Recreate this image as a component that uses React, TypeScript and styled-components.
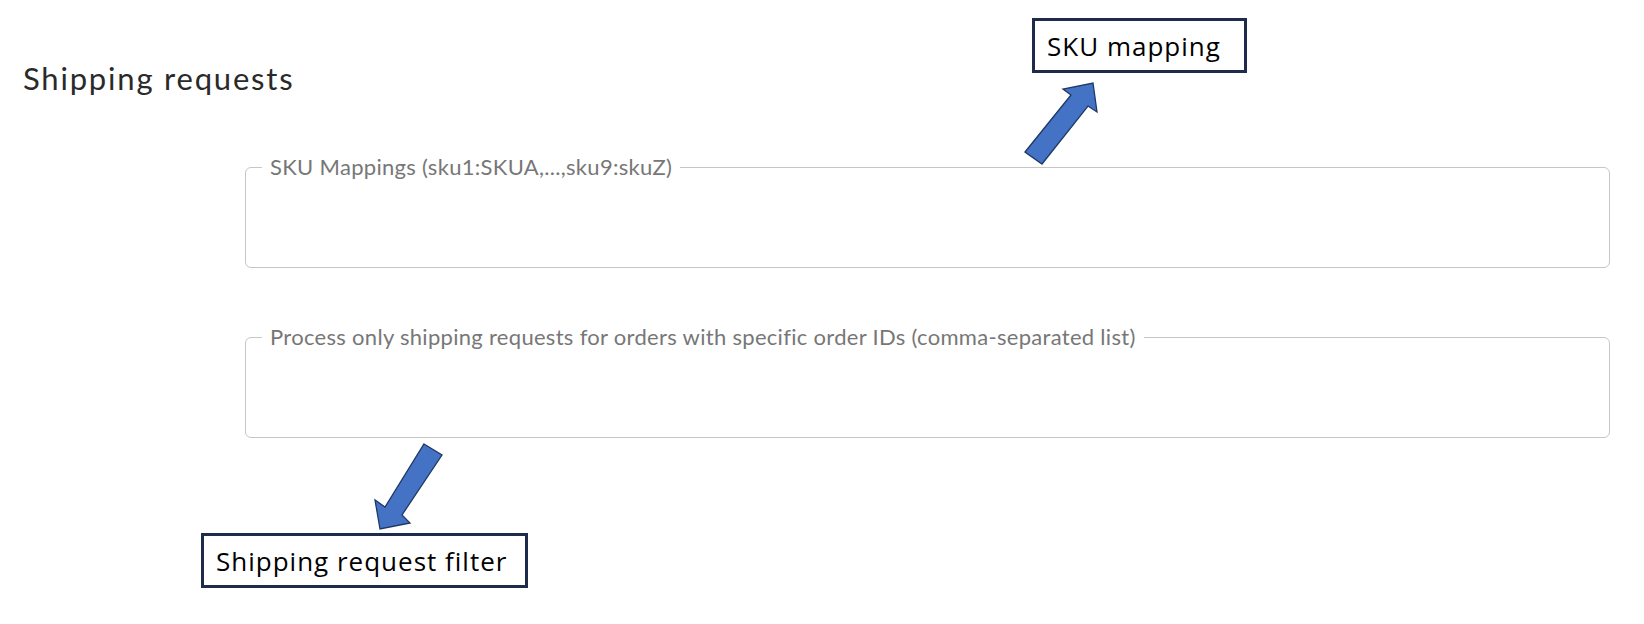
import styled, { createGlobalStyle } from 'styled-components';

const GlobalStyle = createGlobalStyle`
  html, body {
    margin: 0;
    padding: 0;
    background: #fff;
  }
  body {
    font-family: Lato, "Noto Sans", sans-serif;
  }
`;

const Page = styled.div`
  position: relative;
  width: 1644px;
  height: 624px;
  overflow: hidden;
  background: #fff;
`;

const Title = styled.h2`
  margin: 0;
  padding: 58px 0 0 23px;
  font-family: Lato, "Noto Sans", sans-serif;
  font-weight: 400;
  font-size: 31px;
  letter-spacing: 1.8px;
  line-height: 40px;
  color: #2a2a2a;
`;

const Fields = styled.div`
  display: flex;
  flex-direction: column;
  gap: 57px;
  width: 1365px;
  margin: 57px 0 0 245px;
`;

const FieldSet = styled.fieldset`
  box-sizing: border-box;
  margin: 0;
  padding: 0 16px;
  height: 113px;
  border: 1px solid #c6c6c6;
  border-radius: 6px;
  display: flex;
`;

const Legend = styled.legend`
  padding: 0 8px;
  font-family: Lato, "Noto Sans", sans-serif;
  font-size: 22px;
  letter-spacing: 0.3px;
  line-height: 24px;
  color: #777;
`;

const Input = styled.textarea`
  flex: 1;
  border: none;
  outline: none;
  resize: none;
  background: transparent;
  font: inherit;
`;

const Callout = styled.div<{ $left: number; $top: number; $width: number }>`
  position: absolute;
  left: ${(p) => p.$left}px;
  top: ${(p) => p.$top}px;
  width: ${(p) => p.$width}px;
  height: 55px;
  box-sizing: border-box;
  border: 3px solid #1f2b4b;
  background: #fff;
  padding-left: 12px;
  display: flex;
  align-items: center;
  font-family: "Open Sans", "Noto Sans", sans-serif;
  font-size: 26px;
  letter-spacing: 1px;
  color: #000;
`;

const Arrows = styled.svg`
  position: absolute;
  left: 0;
  top: 0;
  pointer-events: none;
`;

const Arrow = styled.polygon`
  fill: #4472c4;
  stroke: #203864;
  stroke-width: 1.3;
  stroke-linejoin: miter;
`;

const Field = ({ label }: { label: string }) => (
  <FieldSet>
    <Legend>{label}</Legend>
    <Input />
  </FieldSet>
);

export default function App() {
  return (
    <Page>
      <GlobalStyle />
      <Title>Shipping requests</Title>
      <Fields>
        <Field label="SKU Mappings (sku1:SKUA,...,sku9:skuZ)" />
        <Field label="Process only shipping requests for orders with specific order IDs (comma-separated list)" />
      </Fields>

      <Arrows width="1644" height="624" viewBox="0 0 1644 624">
        <Arrow points="1025,152 1071,95 1063,89 1093,83 1097,112 1088,106 1042,164" />
        <Arrow points="424,444 442,455 402,515 410,523 380,529 375,500 385,507" />
      </Arrows>
      <Callout $left={1032} $top={18} $width={215}>SKU mapping</Callout>
      <Callout $left={201} $top={533} $width={327}>Shipping request filter</Callout>
    </Page>
  );
}
